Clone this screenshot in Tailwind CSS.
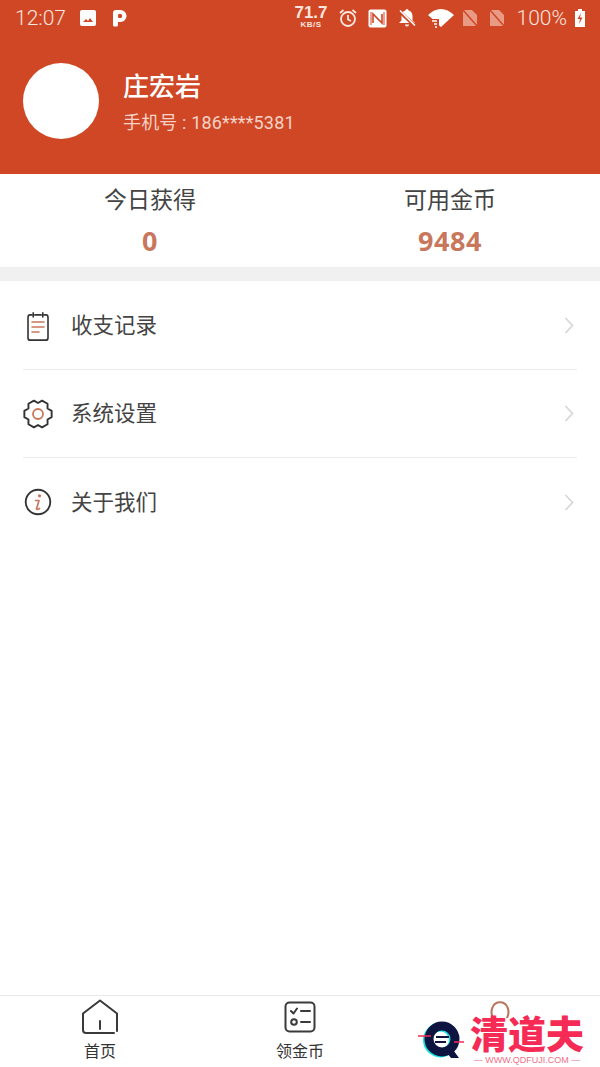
<!DOCTYPE html>
<html lang="en">
<head>
    <meta charset="utf-8">
    <title>个人中心</title>
    <script src="https://cdn.jsdelivr.net/npm/@tailwindcss/browser@4"></script>
</head>
<body class="relative w-[600px] h-[1067px] overflow-hidden bg-white flex flex-col font-['Roboto','Noto_Sans_CJK_SC',sans-serif]">

    <!-- header -->
    <header class="h-[174px] shrink-0 bg-[#d04726] text-white">
        <div class="h-[36px] flex items-center pl-[15px] pr-[14px] text-[#fbe6de]">
            <span class="text-[21px] leading-none font-light">12:07</span>
            <svg class="ml-[13px]" width="18" height="18" viewBox="0 0 18 18"><rect x="1" y="1" width="16" height="16" rx="2" fill="#fff"/><path d="M4 13l3-3 2 2 2-3 3 4z" fill="#d04726"/></svg>
            <svg class="ml-[15px]" width="16" height="18" viewBox="0 0 16 18"><path d="M1 4a3 3 0 0 1 3-3h4.500a6 6 0 0 1 0 12H6v3a1.500 1.500 0 0 1-1.500 1.500h-2A1.500 1.500 0 0 1 1 16z" fill="#fff"/><circle cx="8" cy="7" r="2.200" fill="#d04726"/></svg>

            <div class="ml-auto flex flex-col items-center mr-[10px] -mt-[3px] font-['Liberation_Sans',sans-serif] font-bold">
                <span class="text-[17px] leading-[15px]">71.7</span>
                <span class="text-[8px] leading-[9px] tracking-[0.5px]">KB/S</span>
            </div>
            <svg class="mr-[10px]" width="20" height="20" viewBox="0 0 20 20" fill="none" stroke="#fbe6de" stroke-width="1.800"><circle cx="10" cy="11" r="7"/><path d="M10 7v4.500l3 1.500M2 5l3.500-3M18 5l-3.500-3"/></svg>
            <svg class="mr-[10px]" width="19" height="19" viewBox="0 0 19 19"><rect x="0.500" y="0.500" width="18" height="18" rx="2" fill="#fff"/><path d="M5 14V5l9 9V5" fill="none" stroke="#d04726" stroke-width="1.600"/><path d="M3 3v13M16 3v13" stroke="#d04726" stroke-width="1"/></svg>
            <svg class="mr-[11px]" width="20" height="20" viewBox="0 0 20 20"><path d="M10 1a1.500 1.500 0 0 1 1.500 1.500c3 .7 4 3.300 4 6v4l2.500 2.500H2l2.500-2.500v-4c0-2.700 1-5.300 4-6A1.500 1.500 0 0 1 10 1zM8 16.500h4a2 2 0 0 1-4 0z" fill="#fff"/><path d="M2 3l16 15" stroke="#d04726" stroke-width="3.500"/><path d="M3 2.500l15 15" stroke="#fff" stroke-width="1.500"/></svg>
            <svg class="mr-[8px]" width="26" height="20" viewBox="0 0 26 20"><path d="M0 7C8 -1 18 -1 26 7L13 19l-2-1.800V11H4.500z" fill="#fff"/><path d="M4 13h5M6 16h3M7 19h2" stroke="#fff" stroke-width="1.300"/></svg>
            <svg class="mr-[11px]" width="16" height="18" viewBox="0 0 16 18"><path d="M1 1h9l5 5v11H1z" fill="#e89a84"/><path d="M1 1l14 16" stroke="#d04726" stroke-width="1.500"/></svg>
            <svg class="mr-[12px]" width="16" height="18" viewBox="0 0 16 18"><path d="M1 1h9l5 5v11H1z" fill="#e89a84"/><path d="M1 1l14 16" stroke="#d04726" stroke-width="1.500"/></svg>
            <span class="text-[21px] leading-none font-light mr-[7px]">100%</span>
            <svg width="12" height="18" viewBox="0 0 12 18"><path d="M4 0h4v2h3v16H1V2h3z" fill="#fff"/><path d="M7 4L3.500 10H6l-1 5 3.500-6.500H6z" fill="#d04726"/></svg>
        </div>

        <div class="flex items-center pl-[23px] pt-[27px]">
            <div class="w-[76px] h-[76px] rounded-full bg-white"></div>
            <div class="ml-[24px] pt-[3px]">
                <p class="text-[26px] leading-[34px] font-medium">庄宏岩</p>
                <p class="mt-[7px] text-[18px] leading-[24px] tracking-[0.15px] text-[#f6d3c6]">手机号 : 186****5381</p>
            </div>
        </div>
    </header>

    <!-- stats -->
    <section class="h-[93px] shrink-0 grid grid-cols-2 text-center">
        <div class="pt-[12px]">
            <p class="text-[23px] leading-[30px] text-[#444]">今日获得</p>
            <p class="mt-[9px] text-[27px] leading-[32px] font-bold tracking-[0.5px] text-[#c8775c] font-['Noto_Sans',sans-serif]">0</p>
        </div>
        <div class="pt-[12px]">
            <p class="text-[23px] leading-[30px] text-[#444]">可用金币</p>
            <p class="mt-[9px] text-[27px] leading-[32px] font-bold tracking-[0.5px] text-[#c8775c] font-['Noto_Sans',sans-serif]">9484</p>
        </div>
    </section>
    <div class="h-[14px] shrink-0 bg-[#f0f0f0]"></div>

    <!-- menu -->
    <ul class="px-[23px] flex-1 pt-[1px]">
        <li class="h-[88px] flex items-center border-b border-[#ececec]">
            <svg class="w-[30px] shrink-0" width="30" height="32" viewBox="0 0 30 32" fill="none" stroke-linecap="round">
                <path d="M7 4H5a2.500 2.500 0 0 0-2.500 2.500v21A2.500 2.500 0 0 0 5 30h20a2.500 2.500 0 0 0 2.500-2.500v-21A2.500 2.500 0 0 0 25 4h-2M11 4h8M9 2v4M21 2v4" stroke="#333" stroke-width="2" transform="translate(3 1) scale(.8 .97)"/>
                <path d="M9 12h12M9 17h12M9 22h7" stroke="#c8775c" stroke-width="1.600"/>
            </svg>
            <span class="ml-[18px] mt-[2px] text-[21.500px] text-[#444]">收支记录</span>
            <svg class="ml-auto mr-[3px]" width="10" height="17" viewBox="0 0 10 17" fill="none" stroke="#d5d5d5" stroke-width="1.600"><path d="M1.500 1l7 7.500-7 7.500"/></svg>
        </li>
        <li class="h-[88px] flex items-center border-b border-[#ececec]">
            <svg class="w-[30px] shrink-0" width="30" height="30" viewBox="0 0 30 30" fill="none">
                <path d="M28.640 11.850L28.640 18.150L24.530 20.500L24.550 25.240L19.090 28.390L15 26L10.910 28.390L5.450 25.240L5.470 20.500L1.360 18.150L1.360 11.850L5.470 9.500L5.450 4.760L10.910 1.610L15 4L19.090 1.610L24.550 4.760L24.530 9.500z" stroke="#333" stroke-width="1.900" stroke-linejoin="round"/>
                <circle cx="15" cy="15" r="5" stroke="#c8775c" stroke-width="1.800"/>
            </svg>
            <span class="ml-[18px] mt-[2px] text-[21.500px] text-[#444]">系统设置</span>
            <svg class="ml-auto mr-[3px]" width="10" height="17" viewBox="0 0 10 17" fill="none" stroke="#d5d5d5" stroke-width="1.600"><path d="M1.500 1l7 7.500-7 7.500"/></svg>
        </li>
        <li class="h-[88px] flex items-center">
            <svg class="w-[30px] shrink-0" width="30" height="30" viewBox="0 0 30 30" fill="none">
                <circle cx="15" cy="15" r="12.300" stroke="#333" stroke-width="1.900"/>
                <circle cx="16.500" cy="8.800" r="1.600" fill="#c8775c"/>
                <path d="M12.500 13.500h3.500l-2.400 8c-.3 1.200.6 1.500 2.900 0" stroke="#c8775c" stroke-width="1.700" stroke-linecap="round" stroke-linejoin="round"/>
            </svg>
            <span class="ml-[18px] mt-[2px] text-[21.500px] text-[#444]">关于我们</span>
            <svg class="ml-auto mr-[3px]" width="10" height="17" viewBox="0 0 10 17" fill="none" stroke="#d5d5d5" stroke-width="1.600"><path d="M1.500 1l7 7.500-7 7.500"/></svg>
        </li>
    </ul>

    <!-- tab bar -->
    <nav class="h-[72px] shrink-0 border-t border-[#e8e8e8] grid grid-cols-3 text-center">
        <a class="flex flex-col items-center pt-[3px]">
            <svg width="38" height="36" viewBox="0 0 38 36" fill="none" stroke="#3a3a3a" stroke-width="2" stroke-linecap="round" stroke-linejoin="round"><path d="M36 32V14.500L19 1.500 2 14.500V31a3 3 0 0 0 3 3h28"/><path d="M19 22v8"/></svg>
            <span class="mt-[7px] text-[16px] leading-[20px] text-[#333]">首页</span>
        </a>
        <a class="flex flex-col items-center pt-[5px]">
            <svg width="32" height="32" viewBox="0 0 32 32" fill="none" stroke="#3a3a3a" stroke-width="2" stroke-linecap="round" stroke-linejoin="round"><rect x="1.500" y="1.500" width="29" height="29" rx="4"/><path d="M7 10l2.500 2.500L13 7.500M17 10h9M17 21h9"/><circle cx="10" cy="21" r="2.800"/></svg>
            <span class="mt-[9px] text-[16px] leading-[20px] text-[#333]">领金币</span>
        </a>
        <a class="flex flex-col items-center pt-[5px]">
            <svg width="20" height="24" viewBox="0 0 20 24" fill="none" stroke="#b9745c" stroke-width="2"><path d="M5 20C1 15 1 10 2.500 6.500a8 8 0 0 1 15 0C19 10 19 15 15 20"/></svg>
        </a>
    </nav>

    <!-- watermark over the tab bar -->
    <div class="absolute left-[418px] top-[1018px] w-[182px] h-[49px] bg-white/90 flex items-start">
        <svg class="mt-[3px] shrink-0" width="48" height="40" viewBox="0 0 48 40" fill="none">
            <circle cx="24" cy="18" r="13" stroke="#14e0e0" stroke-width="9" transform="translate(-1.500 1)"/>
            <circle cx="24" cy="18" r="13" stroke="#0d1440" stroke-width="9"/>
            <path d="M26 28l7 9h8l-8-11z" fill="#0d1440"/>
            <path d="M0 15h13M36 21h10" stroke="#f52a55" stroke-width="1.500"/>
            <path d="M18 16h13M17 21h11" stroke="#0d1440" stroke-width="2"/>
        </svg>
        <div class="ml-[4px] -mt-[2px] flex flex-col items-center w-[114px]">
            <span class="text-[38px] leading-[38px] font-black text-[#f52a55] whitespace-nowrap">清道夫</span>
            <span class="mt-[1px] text-[9px] leading-[10px] text-[#f0708a] font-['Liberation_Sans',sans-serif] whitespace-nowrap">— WWW.QDFUJI.COM —</span>
        </div>
    </div>
</body>
</html>
